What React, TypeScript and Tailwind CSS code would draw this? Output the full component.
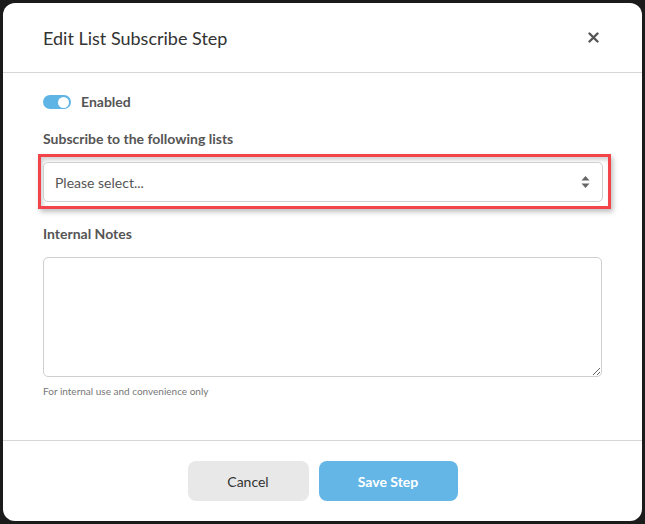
import { useState } from "react";

export default function App() {
  const [enabled, setEnabled] = useState(true);
  const [notes, setNotes] = useState("");

  return (
    <div className="w-[645px] h-[524px] bg-[#1b1b1b] pt-[3px] pl-[3px] pr-[3px] pb-[3px] font-['Lato',sans-serif]">
      <div className="h-full bg-white rounded-[12px] flex flex-col">
        <div className="h-[70px] shrink-0 flex items-center justify-between pl-10 pr-[43px] border-b border-[#d6d6d6]">
          <h1 className="text-[18px] text-[#333] leading-none">Edit List Subscribe Step</h1>
          <button className="text-[#555]">
            <svg width="11" height="11" viewBox="0 0 11 11">
              <path d="M1.5 1.5 L9.5 9.5 M9.5 1.5 L1.5 9.5" stroke="currentColor" strokeWidth="2.4" strokeLinecap="round" />
            </svg>
          </button>
        </div>

        <div className="flex-1 px-10 pt-[22px]">
          <div className="h-[14px] flex items-center gap-[10px]">
            <button
              onClick={() => setEnabled(!enabled)}
              className={`w-[28px] h-[14px] rounded-full flex items-center p-[2px] ${enabled ? "bg-[#5fb4e6] justify-end" : "bg-[#ccc] justify-start"}`}
            >
              <span className="w-[11px] h-[11px] rounded-full bg-white" />
            </button>
            <span className="text-[14px] font-bold text-[#555] leading-none">Enabled</span>
          </div>

          <label className="block mt-[21px] text-[14px] font-bold text-[#555] leading-[18px]">Subscribe to the following lists</label>

          <div className="mt-[6px] -ml-[5px] -mr-[9px] border-[3px] border-[#f24449] pl-[2px] pt-[5px] pr-[5px] pb-[4px] shadow-[inset_2px_3px_4px_rgba(0,0,0,0.18),2px_3px_5px_rgba(0,0,0,0.25)]">
            <div className="h-[40px] bg-white border border-[#cfcfcf] rounded-[5px] flex items-center justify-between pl-[11px] pr-[12px]">
              <span className="text-[14px] text-[#555]">Please select...</span>
              <svg width="9" height="14" viewBox="0 0 9 14">
                <path d="M4.5 1 L8.5 5.5 H0.5 Z M4.5 13 L8.5 8.5 H0.5 Z" fill="#666" />
              </svg>
            </div>
          </div>

          <label className="block mt-[16px] text-[14px] font-bold text-[#555] leading-[18px]">Internal Notes</label>
          <textarea
            value={notes}
            onChange={(e) => setNotes(e.target.value)}
            className="block mt-[14px] w-full h-[120px] border border-[#cfcfcf] rounded-[5px] outline-none text-[13px] p-2"
          />
          <p className="mt-[7px] text-[10px] text-[#777] leading-[14px]">For internal use and convenience only</p>
        </div>

        <div className="h-[81px] shrink-0 border-t border-[#d6d6d6] flex items-start justify-center gap-[10px] pt-[20px]">
          <button className="w-[121px] h-[40px] rounded-[8px] bg-[#e8e8e8] text-[14px] text-[#333]">Cancel</button>
          <button className="w-[139px] h-[40px] rounded-[8px] bg-[#63b6e6] text-[14px] font-bold text-white">Save Step</button>
        </div>
      </div>
    </div>
  );
}
